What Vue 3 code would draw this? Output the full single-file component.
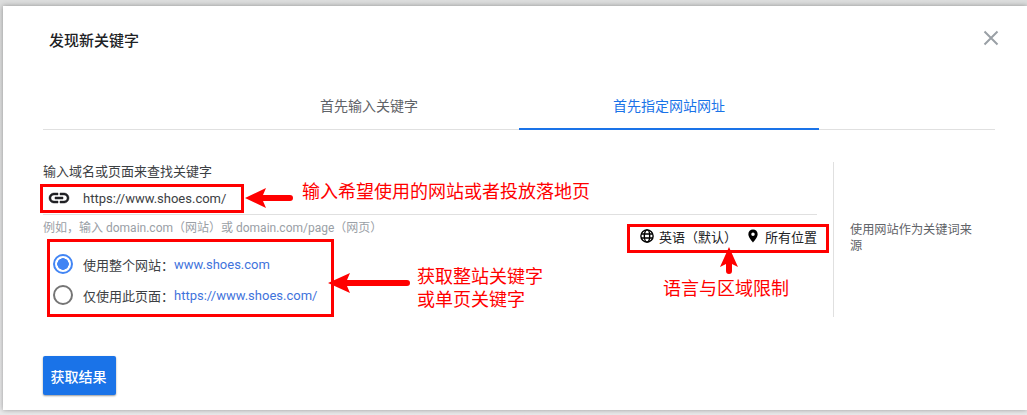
<script setup>
const tabs = [
  { label: '首先输入关键字', active: false },
  { label: '首先指定网站网址', active: true },
]
const options = [
  { label: '使用整个网站：', url: 'www.shoes.com', checked: true },
  { label: '仅使用此页面：', url: 'https://www.shoes.com/', checked: false },
]
</script>

<template>
  <div class="page">
    <div class="dialog">
      <header class="head">
        <h1 class="title">发现新关键字</h1>
        <svg class="close" width="16" height="16" viewBox="0 0 16 16" fill="none" stroke="#9aa0a6" stroke-width="2">
          <path d="M1.500 1.500l13 13M14.500 1.500l-13 13" />
        </svg>
      </header>

      <nav class="tabs">
        <div v-for="t in tabs" :key="t.label" class="tab" :class="{ active: t.active }">{{ t.label }}</div>
      </nav>

      <section class="body">
        <div class="main">
          <div class="label">输入域名或页面来查找关键字</div>
          <div class="field">
            <svg class="link" width="24" height="24" viewBox="0 0 24 24" fill="#202124" stroke="#202124" stroke-width=".5">
              <path d="M3.900 12c0-1.710 1.390-3.100 3.100-3.100h4V7H7c-2.760 0-5 2.240-5 5s2.240 5 5 5h4v-1.900H7c-1.710 0-3.100-1.390-3.100-3.100zM8 13h8v-2H8v2zm9-6h-4v1.900h4c1.710 0 3.100 1.390 3.100 3.100s-1.390 3.100-3.100 3.100h-4V17h4c2.760 0 5-2.240 5-5s-2.240-5-5-5z" />
            </svg>
            <span class="url">https://www.shoes.com/</span>
          </div>
          <div class="hint-row">
            <div class="hint">例如，输入 domain.com（网站）或 domain.com/page（网页）</div>
          </div>
          <div class="lower">
            <div class="options">
              <div v-for="o in options" :key="o.url" class="option">
                <span class="radio" :class="{ on: o.checked }"></span>
                <span class="opt-label">{{ o.label }}</span>
                <span class="opt-url">{{ o.url }}</span>
              </div>
            </div>
            <div class="filters">
              <svg width="14" height="14" viewBox="0 0 24 24" fill="none" stroke="#000" stroke-width="2.400">
                <circle cx="12" cy="12" r="10.500" />
                <ellipse cx="12" cy="12" rx="4.600" ry="10.500" />
                <path d="M2 8.500h20M2 15.500h20" />
              </svg>
              <span class="f-text">英语（默认）</span>
              <svg class="pin" width="14" height="14" viewBox="0 0 24 24" fill="#000">
                <path d="M12 1C7.400 1 4 4.500 4 9c0 5.600 8 14 8 14s8-8.400 8-14c0-4.500-3.400-8-8-8zm0 11a3 3 0 1 1 0-6 3 3 0 0 1 0 6z" />
              </svg>
              <span class="f-text">所有位置</span>
            </div>
          </div>
        </div>
        <aside class="side">使用网站作为关键词来源</aside>
      </section>

      <button class="submit" type="button">获取结果</button>
    </div>

    <!-- screenshot annotations laid over the dialog -->
    <div class="box box-a"></div>
    <div class="box box-b"></div>
    <div class="box box-c"></div>

    <svg class="arrows" width="1027" height="415" viewBox="0 0 1027 415" fill="#f00">
      <path d="M245 198l21-10-3 7h27a3 3 0 0 1 0 6h-27l3 7z" />
      <path d="M328 283l22-10-3 7h60a3 3 0 0 1 0 6h-60l3 7z" />
      <path d="M729 247l9 20-6-3v7a3 3 0 0 1-6 0v-7l-6 3z" />
    </svg>

    <div class="note note-a">输入希望使用的网站或者投放落地页</div>
    <div class="note note-b">获取整站关键字<br />或单页关键字</div>
    <div class="note note-c">语言与区域限制</div>
  </div>
</template>

<style>
html, body { margin: 0; background: #e2e3e4; overflow: hidden; }
</style>

<style scoped>
.page {
  position: relative;
  width: 1027px;
  height: 415px;
  padding: 6px 0 5px 3px;
  box-sizing: border-box;
  overflow: hidden;
  background: linear-gradient(#dcdddd, #e9e9ea);
  font-family: Roboto, "Noto Sans CJK SC", sans-serif;
  color: #202124;
}
.dialog {
  height: 404px;
  background: #fff;
  padding: 0 32px 0 40px;
  box-sizing: border-box;
  display: flex;
  flex-direction: column;
  box-shadow: 0 0 5px rgba(0, 0, 0, .35);
}
.head {
  display: flex;
  align-items: center;
  justify-content: space-between;
  height: 68px;
  padding: 0 0 0 6px;
}
.title {
  margin: 2px 0 0;
  font-size: 15px;
  font-weight: 500;
  line-height: 20px;
  color: #202124;
}
.close { margin-top: -4px; margin-right: -4px; }
.tabs {
  display: flex;
  justify-content: center;
  height: 56px;
  border-bottom: 1px solid #e0e0e0;
  box-sizing: border-box;
}
.tab {
  width: 300px;
  height: 56px;
  box-sizing: border-box;
  padding-top: 24px;
  text-align: center;
  font-size: 14px;
  line-height: 16px;
  color: #5f6368;
}
.tab.active {
  color: #1a73e8;
  border-bottom: 2px solid #1a73e8;
}
.body {
  display: flex;
  margin-top: 32px;
  height: 155px;
}
.main {
  width: 774px;
  flex: none;
}
.label {
  font-size: 13px;
  line-height: 20px;
  color: #3c4043;
}
.field {
  display: flex;
  align-items: center;
  height: 33px;
  padding-left: 4px;
  border-bottom: 1px solid #e0e0e0;
  box-sizing: border-box;
}
.link { flex: none; }
.url {
  margin-left: 12px;
  font-size: 13px;
  color: #3c4043;
}
.hint-row { height: 26px; }
.hint {
  font-size: 12px;
  line-height: 26px;
  color: #9aa0a6;
  white-space: nowrap;
}
.lower {
  display: flex;
  justify-content: space-between;
  align-items: flex-start;
}
.options {
  padding-left: 10px;
  padding-top: 13px;
  display: flex;
  flex-direction: column;
  gap: 11px;
}
.option {
  display: flex;
  align-items: center;
  height: 20px;
  font-size: 13px;
  color: #3c4043;
}
.radio {
  width: 20px;
  height: 20px;
  box-sizing: border-box;
  border: 2px solid #757575;
  border-radius: 50%;
  margin-right: 10px;
  flex: none;
}
.radio.on {
  border-color: #4285f4;
  background: radial-gradient(circle, #4285f4 0 5.500px, #fff 6px);
}
.opt-url { color: #3f73dc; }
.filters {
  display: flex;
  align-items: center;
  height: 20px;
  margin-top: -15px;
  font-size: 13px;
  color: #202124;
}
.filters svg { flex: none; margin-right: 5px; }
.filters .pin { margin-left: 9px; margin-right: 5px; }
.f-text { white-space: nowrap; }
.side {
  margin-left: 16px;
  width: 128px;
  border-left: 1px solid #e0e0e0;
  padding: 60px 16px 0 16px;
  height: 95px;
  font-size: 12.200px;
  line-height: 16px;
  color: #5f6368;
}
.submit {
  align-self: flex-start;
  margin-top: 39px;
  width: 73px;
  height: 39px;
  padding: 0 2px 0 0;
  border: 0;
  border-radius: 2px;
  background: #1a73e8;
  color: #fff;
  font: 500 14px Roboto, "Noto Sans CJK SC", sans-serif;
  box-shadow: 0 1px 2px rgba(0, 0, 0, .4);
}
.box {
  position: absolute;
  box-sizing: border-box;
  border: 3px solid #f00;
}
.box-a { left: 40px; top: 184px; width: 204px; height: 29px; }
.box-b { left: 47px; top: 239px; width: 287px; height: 78px; }
.box-c { left: 627px; top: 224px; width: 202px; height: 29px; }
.arrows { position: absolute; left: 0; top: 0; pointer-events: none; }
.note {
  position: absolute;
  color: #f00;
  font-size: 18px;
  line-height: 23px;
  white-space: nowrap;
}
.note-a { left: 302px; top: 180px; }
.note-b { left: 417px; top: 265px; }
.note-c { left: 663px; top: 277px; }
</style>
